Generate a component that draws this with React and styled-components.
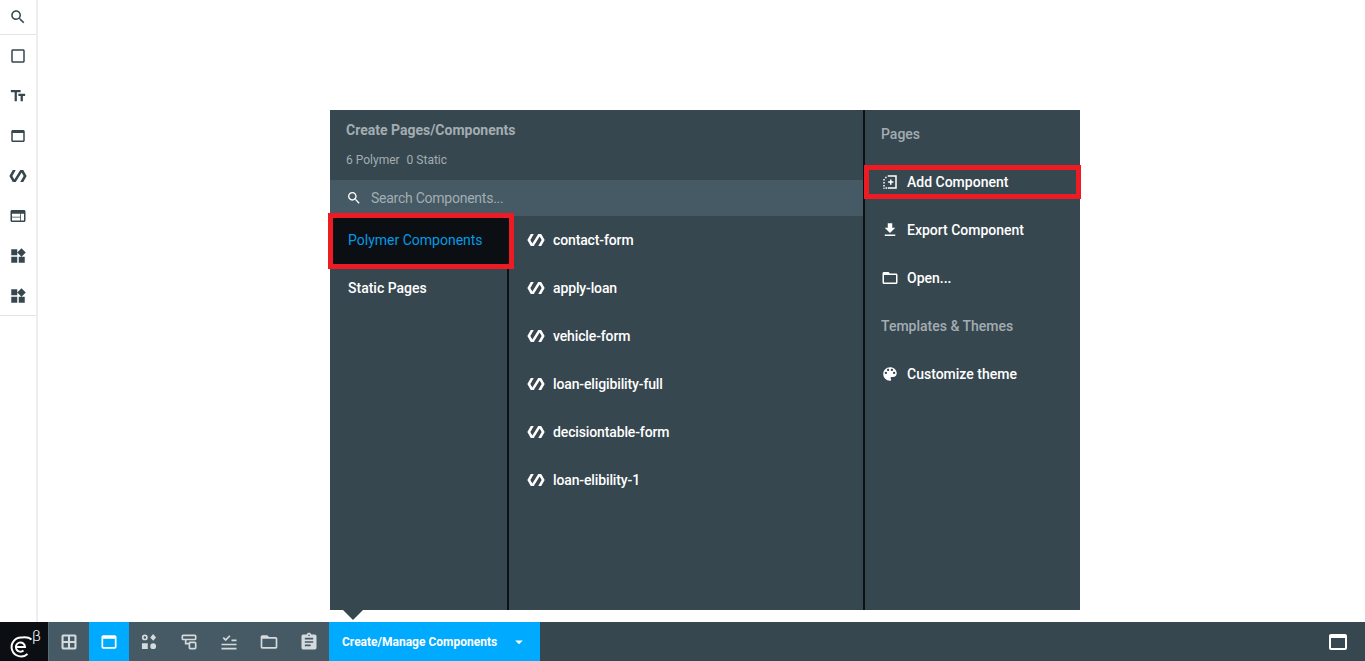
import React from 'react';
import styled, { createGlobalStyle } from 'styled-components';

const GlobalStyle = createGlobalStyle`
  html, body {
    margin: 0;
    padding: 0;
    height: 100%;
    background: #fff;
    overflow: hidden;
  }
  * {
    box-sizing: border-box;
  }
  #root {
    height: 100%;
  }
`;

const paths = {
  search: 'M15.5 14h-.79l-.28-.27C15.41 12.59 16 11.11 16 9.5 16 5.91 13.09 3 9.5 3S3 5.91 3 9.5 5.91 16 9.5 16c1.61 0 3.09-.59 4.23-1.57l.27.28v.79l5 4.99L20.49 19l-4.99-5zm-6 0C7.01 14 5 11.99 5 9.5S7.01 5 9.5 5 14 7.01 14 9.5 11.99 14 9.5 14z',
  square: 'M19 5v14H5V5h14m0-2H5c-1.1 0-2 .9-2 2v14c0 1.1.9 2 2 2h14c1.1 0 2-.9 2-2V5c0-1.1-.9-2-2-2z',
  text: 'M2.5 4v3h5v12h3V7h5V4h-13zm19 5h-9v3h3v7h3v-7h3V9z',
  webAsset: 'M19 4H5c-1.11 0-2 .9-2 2v12c0 1.1.89 2 2 2h14c1.1 0 2-.9 2-2V6c0-1.1-.89-2-2-2zm0 14H5V8h14v10z',
  polymer: 'M19 4h-4L7.11 16.63 4.5 12 9 4H5L.5 12 5 20h4l7.89-12.63L19.5 12 15 20h4l4.5-8z',
  web: 'M20 4H4c-1.1 0-1.99.9-1.99 2L2 18c0 1.1.9 2 2 2h16c1.1 0 2-.9 2-2V6c0-1.1-.9-2-2-2zm-5 14H4v-4h11v4zm0-5H4V9h11v4zm5 5h-4V9h4v9z',
  widgets: 'M13 13v8h8v-8h-8zM3 21h8v-8H3v8zM3 3v8h8V3H3zm13.66-1.31L11 7.34 16.66 13l5.66-5.66-5.66-5.65z',
  grid: 'M19 3H5a2 2 0 0 0-2 2v14a2 2 0 0 0 2 2h14a2 2 0 0 0 2-2V5a2 2 0 0 0-2-2zM10.75 18.5H5.5v-5.25h5.25v5.25zm0-7.75H5.5V5.5h5.25v5.25zm7.75 7.75h-5.25v-5.25h5.25v5.25zm0-7.75h-5.25V5.5h5.25v5.25z',
  shapes: 'M7 3a3.5 3.5 0 1 1 0 7 3.5 3.5 0 0 1 0-7zm0 2a1.5 1.5 0 1 0 0 3 1.5 1.5 0 0 0 0-3zM17 2.5l3.5 4-3.5 4-3.5-4zM3.5 13.5h7v7h-7zM17 13.5a3.5 3.5 0 1 1 0 7 3.5 3.5 0 0 1 0-7z',
  flow: 'M5 3h14a2 2 0 0 1 2 2v3a2 2 0 0 1-2 2H9v3h2.5a2 2 0 0 1 2-1.5H19a2 2 0 0 1 2 2V19a2 2 0 0 1-2 2h-5.5a2 2 0 0 1-2-2v-4H7v-5H5a2 2 0 0 1-2-2V5a2 2 0 0 1 2-2zm0 2v3h14V5H5zm8.5 8.5V19H19v-5.5h-5.5z',
  checklist: 'M4.4 7.4l1.4-1.4 2.2 2.2 4.4-4.4 1.4 1.4L8 11zM15 9h6v2h-6zM3 14h18v2H3zM3 19h18v2H3z',
  folder: 'M20 6h-8l-2-2H4c-1.1 0-1.99.9-1.99 2L2 18c0 1.1.9 2 2 2h16c1.1 0 2-.9 2-2V8c0-1.1-.9-2-2-2zm0 12H4V8h16v10z',
  clipboard: 'M19 3h-4.18C14.4 1.84 13.3 1 12 1c-1.3 0-2.4.84-2.82 2H5c-1.1 0-2 .9-2 2v14c0 1.1.9 2 2 2h14c1.1 0 2-.9 2-2V5c0-1.1-.9-2-2-2zm-7 0c.55 0 1 .45 1 1s-.45 1-1 1-1-.45-1-1 .45-1 1-1zm2 14H7v-2h7v2zm3-4H7v-2h10v2zm0-4H7V7h10v2z',
  addPage: 'M9 3h12v18H9v-2h10V5H9zM5.5 5h2v2h-2zM3 8h2v2H3zM3 12h2v2H3zM3 16h2v2H3zM3 19.5h2V21H3zM6 19h2v2H6zM12 8.5h2V11h2.5v2H14v2.5h-2V13H9.5v-2H12z',
  download: 'M19 9h-4V3H9v6H5l7 7 7-7zM5 18v2h14v-2H5z',
  palette: 'M12 3c-4.97 0-9 4.03-9 9s4.03 9 9 9c.83 0 1.5-.67 1.5-1.5 0-.39-.15-.74-.39-1.01-.23-.26-.38-.61-.38-.99 0-.83.67-1.5 1.5-1.5H16c2.76 0 5-2.24 5-5 0-4.42-4.03-8-9-8zm-5.5 9c-.83 0-1.5-.67-1.5-1.5S5.67 9 6.5 9 8 9.67 8 10.5 7.33 12 6.5 12zm3-4C8.67 8 8 7.33 8 6.5S8.67 5 9.5 5s1.5.67 1.5 1.5S10.33 8 9.5 8zm5 0c-.83 0-1.5-.67-1.5-1.5S13.67 5 14.5 5s1.5.67 1.5 1.5S15.33 8 14.5 8zm3 4c-.83 0-1.5-.67-1.5-1.5S16.67 9 17.5 9s1.5.67 1.5 1.5-.67 1.5-1.5 1.5z',
  caret: 'M7 10l5 5 5-5z',
};

const Icon = ({ name, size = 18 }) => (
  <svg width={size} height={size} viewBox="0 0 24 24" fill="currentColor" style={{ flex: 'none' }}>
    <path d={paths[name]} fillRule="evenodd" />
  </svg>
);

const Page = styled.div`
  height: 100%;
  display: flex;
  flex-direction: column;
  font-family: Roboto, "Liberation Sans", sans-serif;
`;

const Workspace = styled.div`
  flex: 1;
  min-height: 0;
  display: flex;
  position: relative;
`;

const Rail = styled.aside`
  width: 38px;
  border-right: 2px solid #eeeeee;
  color: #37474f;
`;

const RailSearch = styled.div`
  height: 35px;
  display: flex;
  align-items: center;
  justify-content: center;
  border-bottom: 1px solid #e4e4e4;
`;

const RailGroup = styled.div`
  height: 281px;
  padding-top: 1px;
  border-bottom: 1px solid #e4e4e4;
`;

const RailItem = styled.div`
  height: 40px;
  display: flex;
  align-items: center;
  justify-content: center;
`;

const Panel = styled.section`
  position: absolute;
  left: 330px;
  top: 110px;
  width: 750px;
  height: 500px;
  display: flex;
  background: #37474f;
  color: #fff;

  &::after {
    content: '';
    position: absolute;
    left: 13px;
    top: 100%;
    border-left: 10px solid transparent;
    border-right: 10px solid transparent;
    border-top: 10px solid #37474f;
  }
`;

const MainColumn = styled.div`
  width: 535px;
  display: flex;
  flex-direction: column;
  border-right: 2px solid #0c1114;
`;

const PanelHeader = styled.header`
  height: 70px;
  padding: 12px 16px 0;
`;

const PanelTitle = styled.div`
  font-size: 14px;
  font-weight: 700;
  line-height: 16px;
  color: #a3adb2;
`;

const PanelCounts = styled.div`
  display: flex;
  gap: 7px;
  margin-top: 15px;
  font-size: 12px;
  line-height: 14px;
  color: #a3adb2;
`;

const SearchBar = styled.div`
  height: 36px;
  display: flex;
  align-items: center;
  gap: 9px;
  padding-left: 16px;
  background: #455a64;
  font-size: 14px;
  font-weight: 400;
  letter-spacing: -0.25px;
  color: #a3adb2;

  svg {
    color: #fff;
  }
`;

const Body = styled.div`
  flex: 1;
  display: flex;
`;

const CategoryColumn = styled.nav`
  width: 179px;
  border-right: 2px solid #0c1114;
`;

const Row = styled.div`
  position: relative;
  height: 48px;
  display: flex;
  align-items: center;
  font-size: 14px;
  font-weight: 500;
`;

const CategoryRow = styled(Row)`
  padding-left: 18px;
  font-weight: ${({ $active }) => ($active ? 400 : 500)};
  color: ${({ $active }) => ($active ? '#039be5' : '#ffffff')};
  background: ${({ $active }) => ($active ? '#0b0f13' : 'transparent')};
`;

const Marker = styled.span`
  position: absolute;
  top: ${({ $top }) => $top}px;
  bottom: ${({ $bottom }) => $bottom}px;
  left: ${({ $left }) => $left}px;
  right: ${({ $right }) => $right}px;
  border: 5px solid #ed1c24;
`;

const ComponentList = styled.div`
  flex: 1;
`;

const ComponentRow = styled(Row)`
  gap: 8px;
  padding-left: 18px;
  letter-spacing: -0.13px;
`;

const SideColumn = styled.div`
  flex: 1;
`;

const SideHeading = styled(Row)`
  padding-left: 16px;
  color: #a3adb2;
`;

const SideRow = styled(Row)`
  gap: 8px;
  padding-left: 16px;
`;

const BottomBar = styled.footer`
  height: 39px;
  display: flex;
  background: #37474f;
  color: #fff;
`;

const LogoCell = styled.div`
  position: relative;
  width: 49px;
  background: #0b0f13;
  border-right: 1px solid #546e7a;
`;

const LogoBeta = styled.span`
  position: absolute;
  left: 32px;
  top: 6px;
  font-size: 15px;
  line-height: 16px;
  font-weight: 300;
  color: #fff;
`;

const LogoMark = styled.svg`
  position: absolute;
  left: 8px;
  top: 13px;
`;

const ToolGroup = styled.div`
  display: flex;
  background: #455a64;
`;

const ToolButton = styled.div`
  width: 40px;
  display: flex;
  align-items: center;
  justify-content: center;
  color: ${({ $active }) => ($active ? '#ffffff' : '#d5dadd')};
  background: ${({ $active }) => ($active ? '#00aaff' : 'transparent')};
`;

const ManageButton = styled.div`
  width: 211px;
  display: flex;
  align-items: center;
  padding-left: 13px;
  background: #00aaff;
  font-size: 12px;
  font-weight: 700;
  gap: 13px;
`;

const BarEnd = styled.div`
  margin-left: auto;
  width: 54px;
  display: flex;
  align-items: center;
  justify-content: center;
`;

const railItems = ['square', 'text', 'webAsset', 'polymer', 'web', 'widgets', 'widgets'];
const tools = ['grid', 'webAsset', 'shapes', 'flow', 'checklist', 'folder', 'clipboard'];
const components = [
  'contact-form',
  'apply-loan',
  'vehicle-form',
  'loan-eligibility-full',
  'decisiontable-form',
  'loan-elibility-1',
];

export default function App() {
  return (
    <Page>
      <GlobalStyle />
      <Workspace>
        <Rail>
          <RailSearch>
            <Icon name="search" />
          </RailSearch>
          <RailGroup>
            {railItems.map((name, i) => (
              <RailItem key={i}>
                <Icon name={name} />
              </RailItem>
            ))}
          </RailGroup>
        </Rail>

        <Panel>
          <MainColumn>
            <PanelHeader>
              <PanelTitle>Create Pages/Components</PanelTitle>
              <PanelCounts>
                <span>6 Polymer</span>
                <span>0 Static</span>
              </PanelCounts>
            </PanelHeader>
            <SearchBar>
              <Icon name="search" size={16} />
              <span>Search Components...</span>
            </SearchBar>
            <Body>
              <CategoryColumn>
                <CategoryRow $active>
                  Polymer Components
                  <Marker $top={-3} $bottom={-5} $left={-2} $right={-7} />
                </CategoryRow>
                <CategoryRow>Static Pages</CategoryRow>
              </CategoryColumn>
              <ComponentList>
                {components.map((name) => (
                  <ComponentRow key={name}>
                    <Icon name="polymer" />
                    {name}
                  </ComponentRow>
                ))}
              </ComponentList>
            </Body>
          </MainColumn>
          <SideColumn>
            <SideHeading>Pages</SideHeading>
            <SideRow>
              <Icon name="addPage" />
              Add Component
              <Marker $top={7} $bottom={7} $left={-1} $right={-1} />
            </SideRow>
            <SideRow>
              <Icon name="download" />
              Export Component
            </SideRow>
            <SideRow>
              <Icon name="folder" />
              Open...
            </SideRow>
            <SideHeading>Templates &amp; Themes</SideHeading>
            <SideRow>
              <Icon name="palette" />
              Customize theme
            </SideRow>
          </SideColumn>
        </Panel>
      </Workspace>

      <BottomBar>
        <LogoCell>
          <LogoMark width="25" height="24" viewBox="0 0 25 24" fill="none" stroke="#fff" strokeWidth="2">
            <path d="M23.5 4.5C21.5 2.8 18 2 14 2.5A9.5 9.5 0 1 0 19.5 19" />
            <path d="M8.5 12h8.5A4.6 4.6 0 1 0 15.5 15.5" />
          </LogoMark>
          <LogoBeta>β</LogoBeta>
        </LogoCell>
        <ToolGroup>
          {tools.map((name, i) => (
            <ToolButton key={i} $active={i === 1}>
              <Icon name={name} size={20} />
            </ToolButton>
          ))}
        </ToolGroup>
        <ManageButton>
          Create/Manage Components
          <Icon name="caret" size={18} />
        </ManageButton>
        <BarEnd>
          <Icon name="webAsset" size={24} />
        </BarEnd>
      </BottomBar>
    </Page>
  );
}
